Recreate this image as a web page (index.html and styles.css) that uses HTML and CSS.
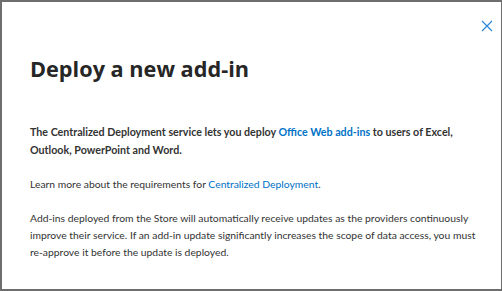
FILE: index.html
```html
<!DOCTYPE html>
<html lang="en">
<head>
    <meta charset="UTF-8">
    <meta name="viewport" content="width=device-width, initial-scale=1.0">
    <title>Deploy a new add-in</title>
    <link rel="stylesheet" href="styles.css">
</head>
<body>
    <div class="dialog">
        <button class="close" aria-label="Close">
            <svg width="12" height="12" viewBox="0 0 12 12">
                <path d="M1 1 L11 11 M11 1 L1 11" stroke="#2b88d8" stroke-width="1.2" fill="none"/>
            </svg>
        </button>
        <h1>Deploy a new add-in</h1>
        <p class="lead">
            The Centralized Deployment service lets you deploy <a href="#">Office Web add-ins</a> to users of Excel,<br>
            Outlook, PowerPoint and Word.
        </p>
        <p>Learn more about the requirements for <a href="#">Centralized Deployment</a>.</p>
        <p>
            Add-ins deployed from the Store will automatically receive updates as the providers continuously<br>
            improve their service. If an add-in update significantly increases the scope of data access, you must<br>
            re-approve it before the update is deployed.
        </p>
    </div>
</body>
</html>
```

FILE: styles.css
```css
body {
    margin: 0;
    padding: 0;
    font-family: Lato, 'Open Sans', Arial, sans-serif;
    color: #333;
    background-color: #fff;
}

.dialog {
    position: relative;
    box-sizing: border-box;
    width: 502px;
    height: 291px;
    border: 2px solid #6e6e6e;
    border-right-width: 1px;
    border-bottom-width: 2px;
    padding: 0 8px 0 28px;
}

.close {
    position: absolute;
    top: 18px;
    right: 8px;
    padding: 0;
    border: none;
    background: none;
    width: 12px;
    height: 12px;
    display: flex;
}

h1 {
    margin: 51px 0 0;
    font-family: 'Open Sans', Lato, sans-serif;
    font-size: 21.7px;
    font-weight: 700;
    color: #262626;
    line-height: 32px;
}

p {
    margin: 17px 0 0;
    font-size: 10.35px;
    line-height: 17px;
    white-space: nowrap;
}

.lead {
    margin-top: 38px;
    font-size: 10.7px;
    font-weight: 700;
    line-height: 18px;
}

a {
    color: #0072c6;
    text-decoration: none;
}
```
